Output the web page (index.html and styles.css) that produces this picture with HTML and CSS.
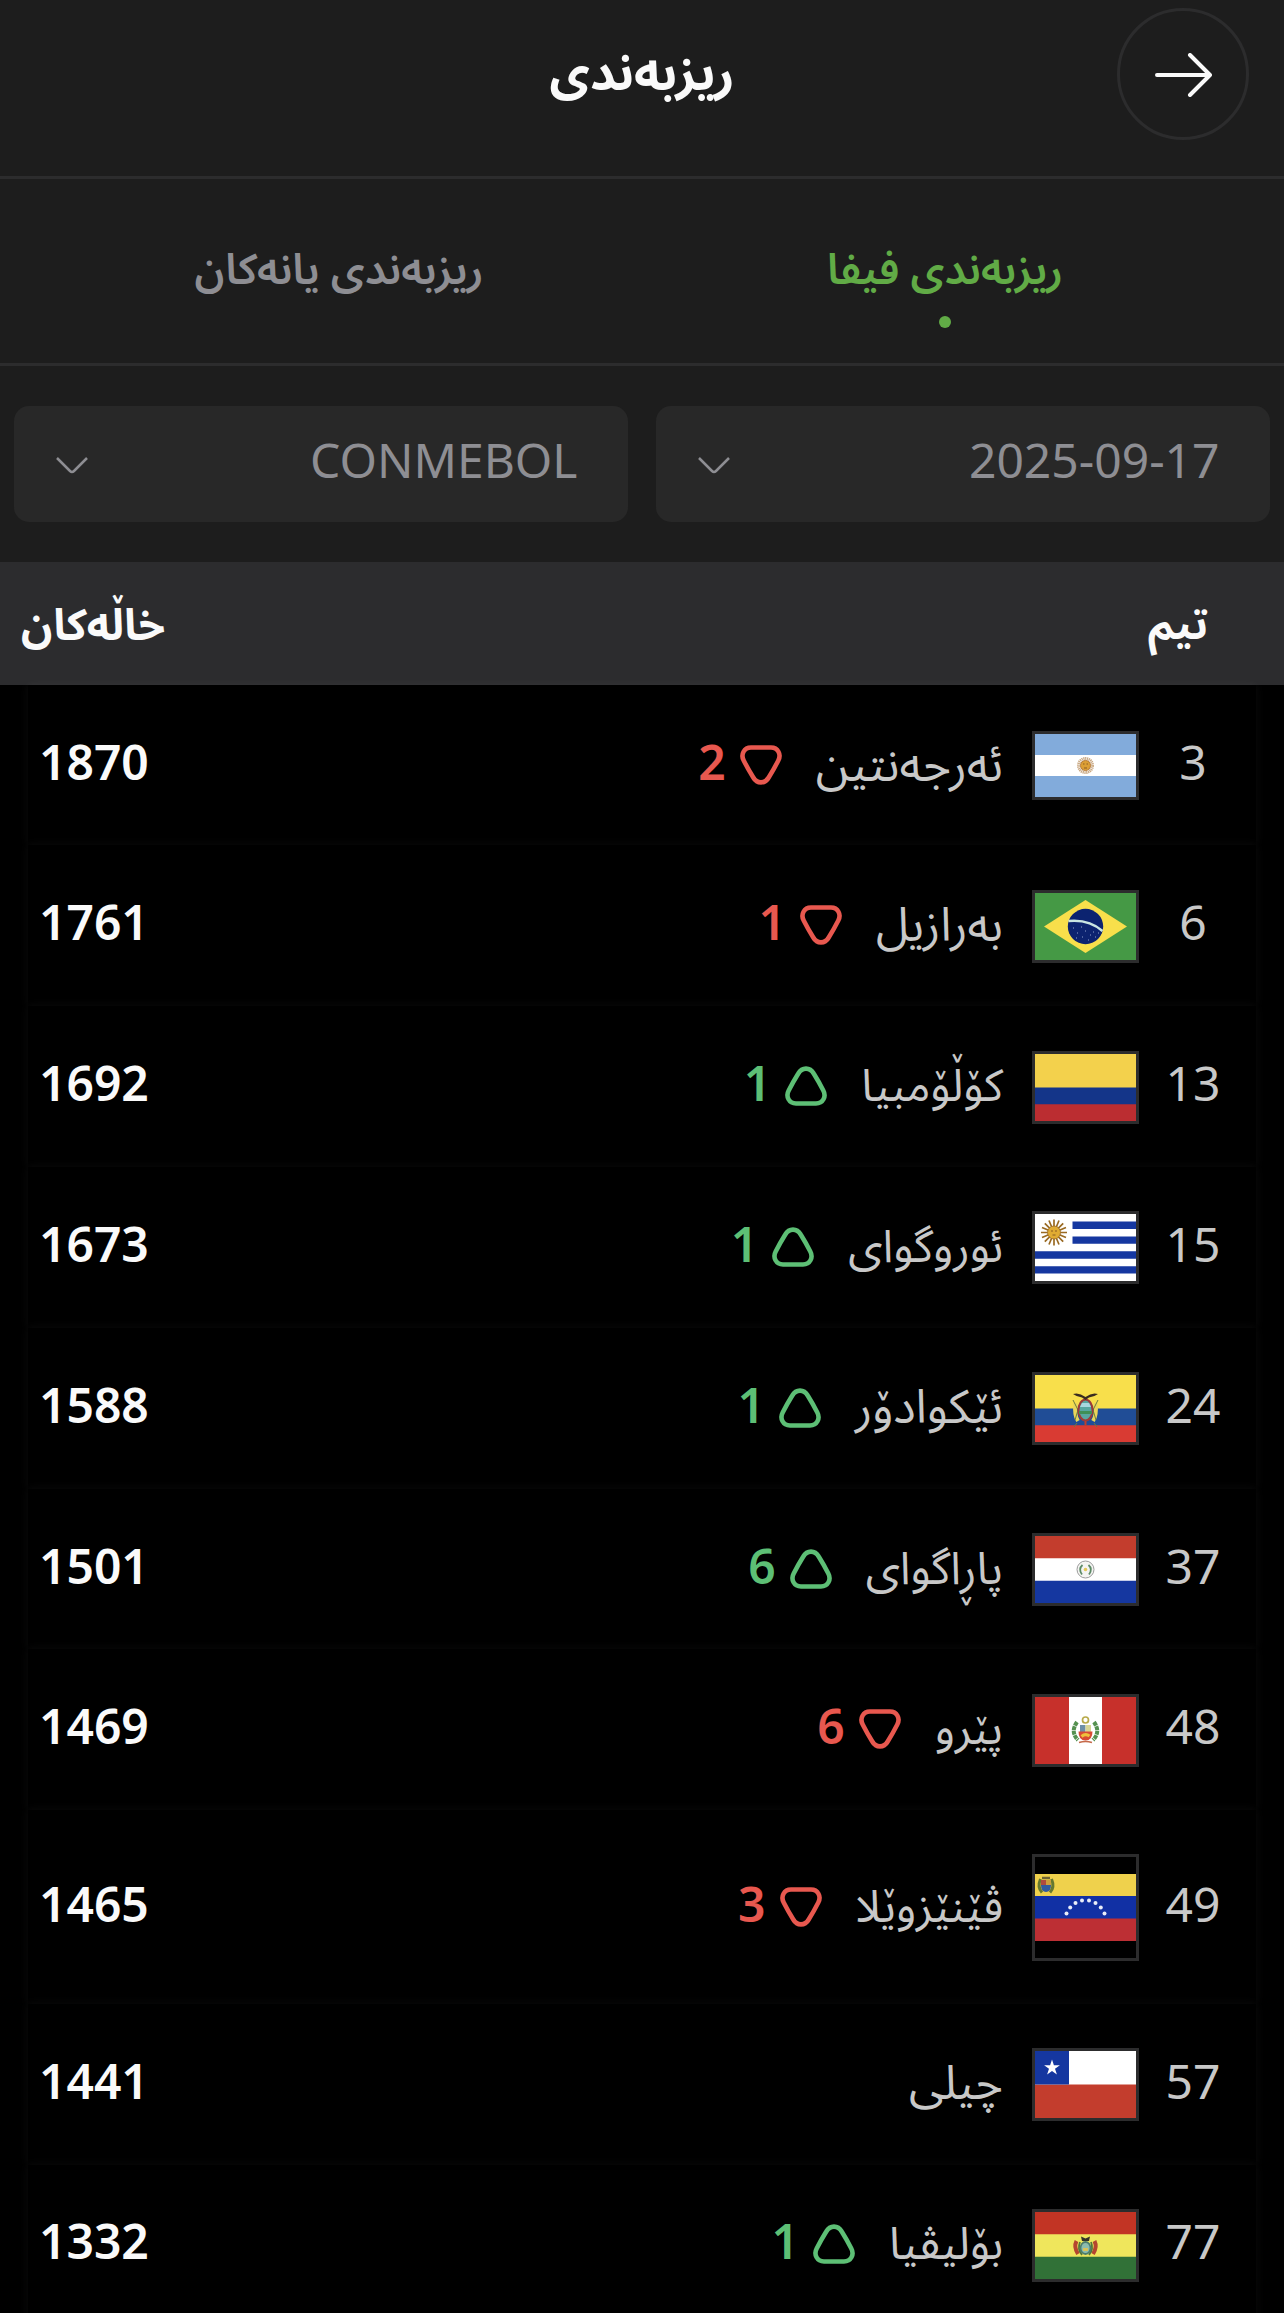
FILE: index.html
```
<!DOCTYPE html>
<html lang="ckb" dir="rtl">
<head>
  <meta charset="UTF-8" />
  <meta name="viewport" content="width=device-width, initial-scale=1.0"/>
  <title>ڕیزبەندی</title>
  <link rel="stylesheet" href="styles.css">
</head>
<body>
  <svg class="defs" aria-hidden="true">
    <symbol id="down" viewBox="0 0 42 40">
      <path d="M11 2.500H31C38 2.500 41.500 9.500 38.300 15.500Q34 24 28.700 32.500C25 39 17 39 13.300 32.500Q8 24 3.700 15.500C0.500 9.500 4 2.500 11 2.500Z" fill="none" stroke="currentColor" stroke-width="4.600"/>
    </symbol>
    <symbol id="up" viewBox="0 0 42 40">
      <path d="M11 37.500H31C38 37.500 41.500 30.500 38.300 24.500Q34 16 28.700 7.500C25 1 17 1 13.300 7.500Q8 16 3.700 24.500C0.500 30.500 4 37.500 11 37.500Z" fill="none" stroke="currentColor" stroke-width="4.600"/>
    </symbol>
  </svg>

  <header class="topbar">
    <button class="back" aria-label="back">
      <svg viewBox="0 0 58 44"><path d="M2 22H54M35 2L55 22L35 42" fill="none" stroke="#fafafa" stroke-width="4" stroke-linecap="round" stroke-linejoin="round"/></svg>
    </button>
    <h1>ریزبەندی</h1>
  </header>

  <nav class="tabs">
    <a class="tab active">ریزبەندی فیفا</a>
    <a class="tab">ریزبەندی یانەکان</a>
  </nav>

  <div class="filters">
    <div class="select">
      <span>2025-09-17</span>
      <svg viewBox="0 0 34 20"><path d="M2 2L15 15Q17 17 19 15L32 2" fill="none" stroke="#8e8e93" stroke-width="2.500"/></svg>
    </div>
    <div class="select">
      <span>CONMEBOL</span>
      <svg viewBox="0 0 34 20"><path d="M2 2L15 15Q17 17 19 15L32 2" fill="none" stroke="#8e8e93" stroke-width="2.500"/></svg>
    </div>
  </div>

  <div class="table-head">
    <span>تیم</span>
    <span class="head-points">خاڵەکان</span>
  </div>

  <main class="list">
    <div class="row">
      <span class="rank">3</span>
      <svg class="flag short" viewBox="0 0 101 63">
        <path fill="#82abdb" d="M0 0h101v63H0z"/>
        <path fill="#fff" d="M0 21h101v21H0z"/>
        <circle cx="50.500" cy="31.500" r="7" fill="none" stroke="#c9a883" stroke-width="3" stroke-dasharray="1.200 .6"/>
        <circle cx="50.500" cy="31.500" r="5" fill="#dc9f35" stroke="#b87a35" stroke-width="1"/>
        <path d="M48 30h1.500M51.500 30h1.500M49 34h3" stroke="#8d5a25" stroke-width="1"/>
      </svg>
      <span class="name wider">ئەرجەنتین</span>
      <span class="move down"><svg><use href="#down"/></svg>2</span>
      <span class="points">1870</span>
    </div>

    <div class="row">
      <span class="rank">6</span>
      <svg class="flag" viewBox="0 0 101 67">
        <path fill="#459945" d="M0 0h101v67H0z"/>
        <path fill="#f8df4b" d="M50.500 7L92 33.500L50.500 60L9 33.500z"/>
        <circle cx="50.500" cy="33.500" r="17.700" fill="#0c2370"/>
        <path d="M33.500 28Q54 26 67.500 38" fill="none" stroke="#c9e5e2" stroke-width="2.600"/>
        <path d="M38 35h1M42 40h1M46 34h1M50 38h1M47 44h1M55 42h1M60 44h1M58 39h1M63 40h1M53 47h1M41 45h1" stroke="#8ea1cb" stroke-width="1"/>
      </svg>
      <span class="name wide">بەرازیل</span>
      <span class="move down"><svg><use href="#down"/></svg>1</span>
      <span class="points">1761</span>
    </div>

    <div class="row">
      <span class="rank">13</span>
      <svg class="flag" viewBox="0 0 101 67">
        <path fill="#f3d14c" d="M0 0h101v34H0z"/>
        <path fill="#143589" d="M0 33.500h101V51H0z"/>
        <path fill="#bb2d31" d="M0 50.300h101V67H0z"/>
      </svg>
      <span class="name">کۆڵۆمبیا</span>
      <span class="move up"><svg><use href="#up"/></svg>1</span>
      <span class="points">1692</span>
    </div>

    <div class="row">
      <span class="rank">15</span>
      <svg class="flag" viewBox="0 0 101 67">
        <path fill="#fff" d="M0 0h101v67H0z"/>
        <path fill="#1537a0" d="M37.500 7.500H101v7.500H37.500zM37.500 22.400H101v7.400H37.500zM0 37.300h101v7.400H0zM0 52.200h101v7.400H0z"/>
        <path d="M19 5.500V31.500M6 18.500H32M9.800 9.300L28.200 27.700M28.200 9.300L9.800 27.700M14 6.500L24 30.500M24 6.500L14 30.500M7 13.500L31 23.500M31 13.500L7 23.500" stroke="#9a6a22" stroke-width="1.700"/>
        <circle cx="19" cy="18.500" r="6.500" fill="#e0ab32" stroke="#9a6a22" stroke-width=".8"/>
        <path d="M16 17h2M20 17h2M17.500 21h3" stroke="#8b5c20" stroke-width="1"/>
      </svg>
      <span class="name">ئوروگوای</span>
      <span class="move up"><svg><use href="#up"/></svg>1</span>
      <span class="points">1673</span>
    </div>

    <div class="row">
      <span class="rank">24</span>
      <svg class="flag" viewBox="0 0 101 67">
        <path fill="#f8df4b" d="M0 0h101v34H0z"/>
        <path fill="#204d96" d="M0 33.500h101V51H0z"/>
        <path fill="#d93b33" d="M0 50.300h101V67H0z"/>
        <path d="M40.500 28Q39 40 43 46M60.500 28Q62 40 58 46" fill="none" stroke="#e8d65a" stroke-width="4"/>
        <path d="M38 25l5 10-3 10M63 25l-5 10 3 10M42 48l-3 4M59 48l3 4" fill="none" stroke="#6f7c3c" stroke-width="1"/>
        <ellipse cx="50.500" cy="35" rx="7" ry="10.500" fill="#58a7a1" stroke="#9c3b3a" stroke-width="2"/>
        <path d="M45 32h11l-2-4h-7z" fill="#a9d7df"/>
        <path d="M44 36h13v3H44z" fill="#3f8f56"/>
        <path d="M38 19Q44 17 50.500 22Q57 17 63 19Q59 22 54 22.500L50.500 25L47 22.500Q42 22 38 19z" fill="#3a2b20"/>
        <path d="M50.500 46v5" stroke="#bf3e2c" stroke-width="2"/>
      </svg>
      <span class="name wide">ئێکوادۆر</span>
      <span class="move up"><svg><use href="#up"/></svg>1</span>
      <span class="points">1588</span>
    </div>

    <div class="row">
      <span class="rank">37</span>
      <svg class="flag" viewBox="0 0 101 67">
        <path fill="#c33d2d" d="M0 0h101v23H0z"/>
        <path fill="#fff" d="M0 22.300h101V45H0z"/>
        <path fill="#1537a0" d="M0 44.700h101V67H0z"/>
        <circle cx="50.500" cy="33.500" r="8.500" fill="#f4f4f2" stroke="#9b9b9b" stroke-width="1"/>
        <path d="M47 38.500Q43 33 47.500 29M54 38.500Q58 33 53.500 29" fill="none" stroke="#5c8a66" stroke-width="1.800"/>
        <circle cx="50.500" cy="33.500" r="1.800" fill="#e3c85a"/>
      </svg>
      <span class="name">پاڕاگوای</span>
      <span class="move up"><svg><use href="#up"/></svg>6</span>
      <span class="points">1501</span>
    </div>

    <div class="row">
      <span class="rank">48</span>
      <svg class="flag" viewBox="0 0 101 67">
        <path fill="#c7302b" d="M0 0h101v67H0z"/>
        <path fill="#fff" d="M34 0h33v67H34z"/>
        <path d="M42 25Q35 35 43 43M59 25Q66 35 58 43" fill="none" stroke="#559150" stroke-width="4" stroke-dasharray="4 .7"/>
        <path d="M44 45.500q6.500-2 13 0" fill="none" stroke="#c56a4a" stroke-width="1.500"/>
        <circle cx="50.500" cy="23" r="3" fill="none" stroke="#b8aa4a" stroke-width="1.700"/>
        <path fill="#6f8fa8" d="M45 28h5.500v7H45z"/>
        <path fill="#d8d594" d="M50.500 28H56v7h-5.500z"/>
        <path fill="#d84a35" d="M43.500 34.500h14q0 9-7 9t-7-9z"/>
        <path d="M46.500 39.500q4-3.500 8-.5" fill="none" stroke="#efc13c" stroke-width="3"/>
      </svg>
      <span class="name">پێرو</span>
      <span class="move down"><svg><use href="#down"/></svg>6</span>
      <span class="points">1469</span>
    </div>

    <div class="row tall">
      <span class="rank">49</span>
      <svg class="flag square" viewBox="0 0 101 101">
        <path fill="#efd14c" d="M0 17h101v22.500H0z"/>
        <path fill="#1130a4" d="M0 39h101v23H0z"/>
        <path fill="#bd2f34" d="M0 61.500h101V84H0z"/>
        <path d="M5.500 22Q2 30 7 35.500M16.500 22q3.500 8-1.500 13.500" fill="none" stroke="#66782f" stroke-width="3"/>
        <path fill="#b04b3d" d="M6 23h5v6H6z"/>
        <path fill="#cc9f3b" d="M11 23h5v6h-5z"/>
        <path fill="#315b9e" d="M6 28h10q0 7-5 7t-5-7z"/>
        <path d="M7 21h8" stroke="#6d6334" stroke-width="2.500"/>
        <g fill="#e9edf9">
          <circle cx="31.500" cy="56.500" r="2"/><circle cx="35.200" cy="50.500" r="2"/><circle cx="40.500" cy="46" r="2"/><circle cx="47" cy="43.600" r="2"/>
          <circle cx="54" cy="43.600" r="2"/><circle cx="60.500" cy="46" r="2"/><circle cx="65.800" cy="50.500" r="2"/><circle cx="69.500" cy="56.500" r="2"/>
        </g>
      </svg>
      <span class="name">ڤێنێزوێلا</span>
      <span class="move down"><svg><use href="#down"/></svg>3</span>
      <span class="points">1465</span>
    </div>

    <div class="row">
      <span class="rank">57</span>
      <svg class="flag" viewBox="0 0 101 67">
        <path fill="#fff" d="M0 0h101v34H0z"/>
        <path fill="#c33d2d" d="M0 33.500h101V67H0z"/>
        <path fill="#1537a0" d="M0 0h34v33.500H0z"/>
        <path fill="#fff" d="M17 8.500l1.900 5.700h6l-4.900 3.500 1.900 5.700L17 19.900l-4.900 3.500 1.900-5.700-4.900-3.500h6z"/>
      </svg>
      <span class="name wide">چیلی</span>
      <span class="points">1441</span>
    </div>

    <div class="row">
      <span class="rank">77</span>
      <svg class="flag" viewBox="0 0 101 67">
        <path fill="#c23424" d="M0 0h101v23H0z"/>
        <path fill="#efe65c" d="M0 22.300h101V45H0z"/>
        <path fill="#317137" d="M0 44.700h101V67H0z"/>
        <path d="M41.500 29q-3 6 1.500 13M59.500 29q3 6-1.500 13" fill="none" stroke="#b5452f" stroke-width="4"/>
        <path d="M45 30q-3 7 2 13M56 30q3 7-2 13" fill="none" stroke="#53763a" stroke-width="1.800"/>
        <ellipse cx="50.500" cy="36" rx="5" ry="6" fill="#8cbcae" stroke="#4d7d6d" stroke-width="1.800"/>
        <path d="M48 36h5v3h-5z" fill="#d9c35a"/>
        <path d="M46 24.500l4.500 2 4.500-2-1 4.500h-7z" fill="#33342a"/>
      </svg>
      <span class="name">بۆلیڤیا</span>
      <span class="move up"><svg><use href="#up"/></svg>1</span>
      <span class="points">1332</span>
    </div>
  </main>
</body>
</html>
```
FILE: styles.css
```
* {
  box-sizing: border-box;
}
body {
  margin: 0;
  height: 2313px;
  overflow: hidden;
  background: #000;
  color: #fafafa;
  font-family: 'Noto Sans', 'Noto Sans Arabic', 'DejaVu Sans', sans-serif;
  font-size: 48px;
}
.defs {
  display: none;
}

.topbar {
  display: grid;
  grid-template-columns: 132px 1fr 132px;
  align-items: start;
  height: 179px;
  padding: 8px 35px 0;
  background: #1d1d1d;
  border-bottom: 3px solid #2c2c2d;
}
.topbar h1 {
  margin: 0;
  font-size: 49.5px;
  line-height: 127px;
  font-weight: bold;
  text-align: center;
}
.back {
  display: flex;
  align-items: center;
  justify-content: center;
  width: 132px;
  height: 132px;
  padding: 2px 0 0 2px;
  background: none;
  border: 3px solid #2c2c2d;
  border-radius: 50%;
}
.back svg {
  width: 58px;
  height: 44px;
}

.tabs {
  display: flex;
  height: 187px;
  padding: 0 36px;
  background: #1d1d1d;
  border-bottom: 3px solid #2c2c2d;
}
.tab {
  flex: 1;
  display: flex;
  flex-direction: column;
  align-items: center;
  padding-top: 56px;
  color: #8e8e93;
  font-size: 42.6px;
  line-height: 64px;
  font-weight: 600;
}
.tab.active {
  color: #61ab46;
}
.tab.active::after {
  content: "";
  width: 12px;
  height: 12px;
  margin-top: 17px;
  border-radius: 50%;
  background: #61ab46;
}

.filters {
  display: flex;
  gap: 28px;
  height: 196px;
  padding: 40px 14px;
  background: #1d1d1d;
}
.select {
  flex: 1;
  display: flex;
  align-items: center;
  justify-content: space-between;
  padding: 0 50.5px 9px 41px;
  background: #282828;
  border-radius: 15px;
  color: #8e8e93;
}
.select svg {
  width: 34px;
  height: 20px;
  margin-top: 13px;
}

.table-head {
  display: flex;
  justify-content: space-between;
  height: 122.7px;
  padding: 0 76px 0 21px;
  background: #2c2c2e;
  font-size: 42px;
  line-height: 122px;
  font-weight: bold;
}
.head-points {
  font-size: 43.5px;
}

.list {
  margin: 0 28px;
}
.row {
  position: relative;
  display: flex;
  align-items: center;
  height: 160.8px;
  padding: 0 13px 0 11px;
  background: #000;
  box-shadow: 0 0 9px rgba(255, 255, 255, 0.05);
}
.row.tall {
  height: 193.5px;
}
.rank {
  width: 100px;
  padding-bottom: 8px;
  color: #c8c8c8;
  text-align: center;
}
.flag {
  width: 107px;
  height: 73px;
  margin: 1px 4px 0 29px;
  border: 3px solid #2c2c2d;
}
.flag.short {
  height: 69px;
}
.flag.square {
  height: 107px;
}
.name {
  color: #c8c8c8;
  font-size: 45px;
}
.name.wide {
  font-size: 47px;
}
.name.wider {
  font-size: 48px;
}
.move {
  display: flex;
  align-items: center;
  gap: 14px;
  margin-right: 34px;
  padding-bottom: 8px;
  font-weight: 560;
}
.move svg {
  width: 42px;
  height: 40px;
  margin-top: 7px;
}
.move.up {
  color: #5dbf75;
}
.move.down {
  color: #e8584f;
}
.points {
  margin-right: auto;
  padding-bottom: 8px;
  font-weight: 560;
}
```
